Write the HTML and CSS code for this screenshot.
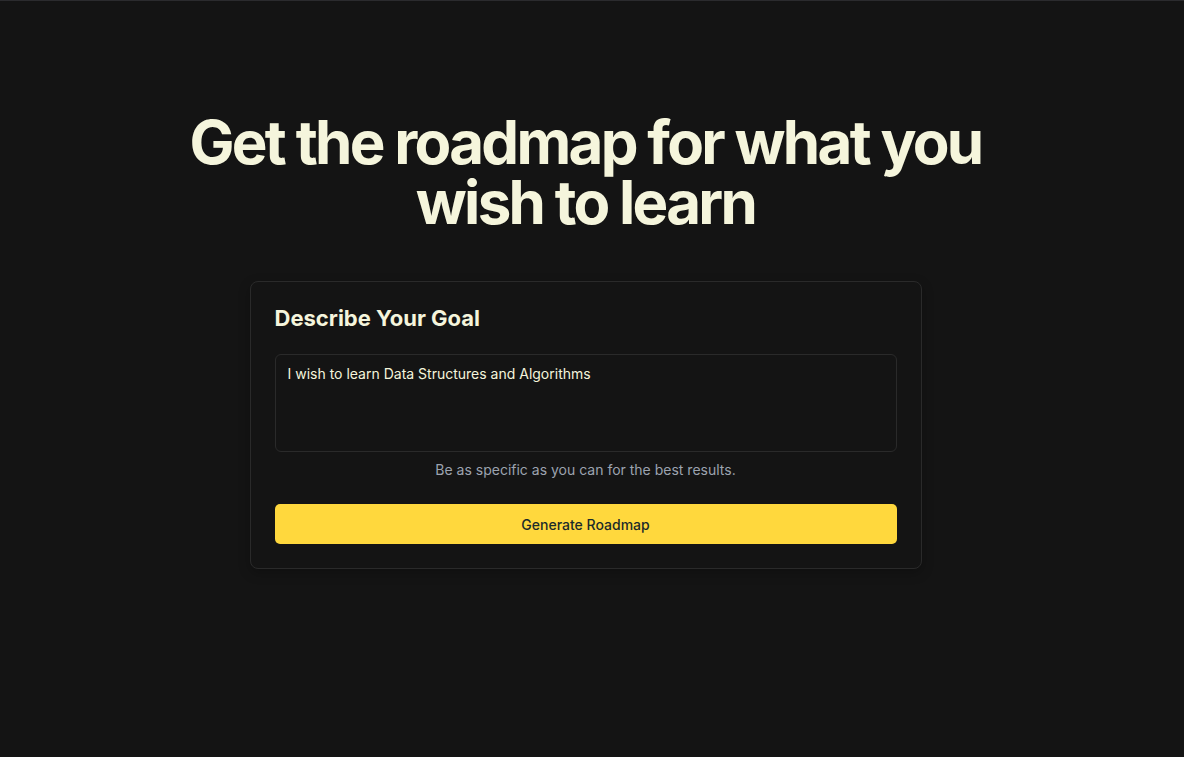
FILE: index.html
```html
<!DOCTYPE html>
<html lang="en">
<head>
<meta charset="utf-8">
<title>Roadmap</title>
<link rel="stylesheet" href="styles.css">
</head>
<body>
<div class="topline"></div>
<main class="page">
  <h1 class="hero">Get the roadmap for what you wish to learn</h1>
  <section class="card">
    <h2 class="card-title">Describe Your Goal</h2>
    <div class="field">I wish to learn Data Structures and Algorithms</div>
    <p class="hint">Be as specific as you can for the best results.</p>
    <button class="btn">Generate Roadmap</button>
  </section>
</main>
</body>
</html>
```
FILE: styles.css
```css
* { box-sizing: border-box; }
html, body { margin: 0; padding: 0; }
body {
  background: #141414;
  font-family: Inter, "Noto Sans", sans-serif;
  color: #f5f5dc;
  height: 757px;
  overflow: hidden;
}
.topline { height: 1px; background: #2b2b2e; }
.page {
  display: flex;
  flex-direction: column;
  align-items: center;
  padding-top: 111px;
  padding-right: 13px;
}
.hero {
  margin: 0;
  width: 820px;
  text-align: center;
  font-size: 60px;
  line-height: 60px;
  font-weight: 700;
  letter-spacing: -2.7px;
  color: #f5f5dc;
}
.card {
  margin-top: 49px;
  width: 672px;
  border: 1px solid #2a2a2a;
  border-radius: 8px;
  padding: 24px 24px 24px 24px;
  display: flex;
  flex-direction: column;
  box-shadow: 0 4px 12px rgba(0,0,0,0.25);
}
.card-title {
  margin: 0;
  font-size: 22px;
  line-height: 25px;
  font-weight: 700;
  letter-spacing: 0;
  color: #f5f5dc;
}
.field {
  margin-top: 23px;
  height: 98px;
  border: 1px solid #2a2a2a;
  border-radius: 6px;
  padding: 10px 12px;
  font-size: 14px;
  line-height: 18px;
  color: #f5f5dc;
}
.hint {
  margin: 8px 0 0;
  text-align: center;
  font-size: 14px;
  line-height: 20px;
  color: #9ca3af;
}
.btn {
  margin-top: 24px;
  height: 40px;
  border: none;
  border-radius: 5px;
  background: #ffd83d;
  color: #1b2b2a;
  font-family: Inter, "Noto Sans", sans-serif;
  font-size: 14px;
  font-weight: 500;
}
```
